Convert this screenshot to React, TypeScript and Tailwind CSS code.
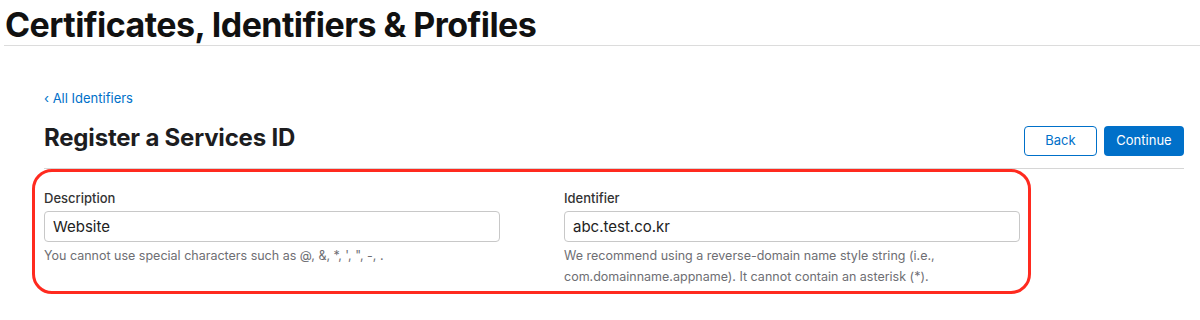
export default function App() {
  return (
    <div className="min-h-[320px] bg-white font-['Inter','Liberation_Sans',sans-serif] text-[#1d1d1f]">
      <header className="pl-[4px]">
        <h1 className="pt-[5px] pl-px text-[34px] font-bold leading-[40px] tracking-[-0.55px] text-[#111]">
          Certificates, Identifiers &amp; Profiles
        </h1>
        <div className="h-px bg-[#dcdcdc]" />
      </header>

      <main className="pl-[44px] pr-[16px]">
        <a href="#" className="mt-[44px] block text-[13px] leading-[16px] text-[#0070c9]">
          ‹ All Identifiers
        </a>

        <div className="mt-[12px] flex items-start justify-between">
          <h2 className="mt-[5px] text-[24px] font-bold leading-[29px] tracking-[-0.2px] text-[#1d1d1f]">
            Register a Services ID
          </h2>
          <div className="mt-[8px] flex gap-[7px]">
            <button className="h-[30px] w-[73px] rounded-[4px] border border-[#0070c9] bg-white text-[13px] text-[#0070c9]">
              Back
            </button>
            <button className="h-[30px] w-[80px] rounded-[4px] bg-[#0070c9] text-[13px] text-white">
              Continue
            </button>
          </div>
        </div>

        <div className="mt-[12px] h-px bg-[#d6d6d6]" />

        <form className="-ml-[12px] w-[999px] rounded-[20px] border-[3px] border-[#ff2a1f] pb-[4px] pl-[9px] pr-[9px] pt-[18px]">
          <div className="grid grid-cols-2 gap-[65px]">
            <div>
              <label className="block text-[13px] font-medium leading-[16px] text-[#333]">
                Description
              </label>
              <input
                defaultValue="Website"
                className="mt-[5px] block h-[31px] w-[456px] rounded-[4px] border border-[#c8c8c8] px-[8px] text-[15px] text-[#222] outline-none"
              />
              <p className="mt-[3px] text-[12.5px] leading-[21px] text-[#6e6e73]">
                You cannot use special characters such as @, &amp;, *, ', ", -, .
              </p>
            </div>
            <div>
              <label className="block text-[13px] font-medium leading-[16px] text-[#333]">
                Identifier
              </label>
              <input
                defaultValue="abc.test.co.kr"
                className="mt-[5px] block h-[31px] w-[456px] rounded-[4px] border border-[#c8c8c8] px-[8px] text-[15px] text-[#222] outline-none"
              />
              <p className="mt-[3px] text-[12.5px] leading-[21px] text-[#6e6e73]">
                We recommend using a reverse-domain name style string (i.e.,
                <br />
                com.domainname.appname). It cannot contain an asterisk (*).
              </p>
            </div>
          </div>
        </form>
      </main>
    </div>
  );
}
